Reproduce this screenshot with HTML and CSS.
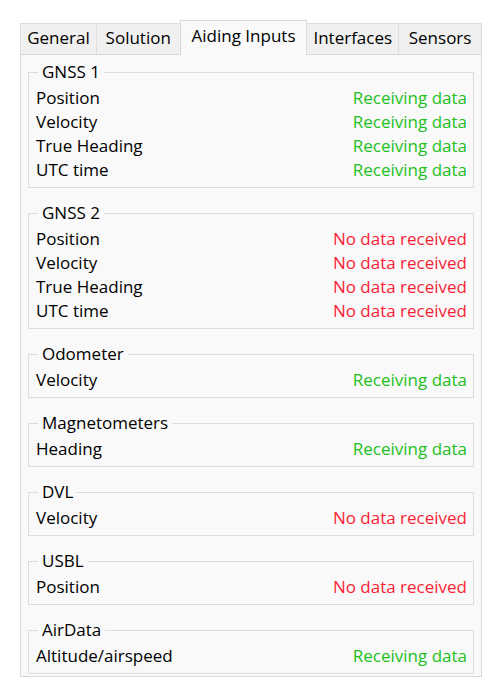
FILE: index.html
```html
<!DOCTYPE html>
<html>
<head>
<meta charset="utf-8">
<link rel="stylesheet" href="styles.css">
</head>
<body>
<div class="window">
  <div class="tabs">
    <div class="tab t-general">General</div>
    <div class="tab t-solution">Solution</div>
    <div class="tab active t-aiding">Aiding Inputs</div>
    <div class="tab t-interfaces">Interfaces</div>
    <div class="tab t-sensors">Sensors</div>
  </div>
  <div class="panel">
    <fieldset class="group">
      <legend>GNSS 1</legend>
      <div class="row"><span>Position</span><span class="ok">Receiving data</span></div>
      <div class="row"><span>Velocity</span><span class="ok">Receiving data</span></div>
      <div class="row"><span>True Heading</span><span class="ok">Receiving data</span></div>
      <div class="row"><span>UTC time</span><span class="ok">Receiving data</span></div>
    </fieldset>
    <fieldset class="group">
      <legend>GNSS 2</legend>
      <div class="row"><span>Position</span><span class="bad">No data received</span></div>
      <div class="row"><span>Velocity</span><span class="bad">No data received</span></div>
      <div class="row"><span>True Heading</span><span class="bad">No data received</span></div>
      <div class="row"><span>UTC time</span><span class="bad">No data received</span></div>
    </fieldset>
    <fieldset class="group">
      <legend>Odometer</legend>
      <div class="row"><span>Velocity</span><span class="ok">Receiving data</span></div>
    </fieldset>
    <fieldset class="group">
      <legend>Magnetometers</legend>
      <div class="row"><span>Heading</span><span class="ok">Receiving data</span></div>
    </fieldset>
    <fieldset class="group">
      <legend>DVL</legend>
      <div class="row"><span>Velocity</span><span class="bad">No data received</span></div>
    </fieldset>
    <fieldset class="group">
      <legend>USBL</legend>
      <div class="row"><span>Position</span><span class="bad">No data received</span></div>
    </fieldset>
    <fieldset class="group">
      <legend>AirData</legend>
      <div class="row"><span>Altitude/airspeed</span><span class="ok">Receiving data</span></div>
    </fieldset>
  </div>
</div>
</body>
</html>
```
FILE: styles.css
```css
html, body {
  margin: 0;
  padding: 0;
  background: #ffffff;
}
body {
  font-family: "Open Sans", "Noto Sans", sans-serif;
  font-size: 17px;
  color: #000000;
}
.window {
  width: 462px;
  padding: 20px 0 0 20px;
}
.tabs {
  display: flex;
  align-items: flex-end;
  height: 34px;
  position: relative;
  z-index: 1;
}
.tab {
  box-sizing: border-box;
  height: 31px;
  line-height: 28px;
  text-align: center;
  background: #f0f0f0;
  border: 1px solid #dddddd;
  border-bottom: none;
  margin-left: -1px;
  white-space: nowrap;
}
.tab:first-child {
  margin-left: 0;
}
.tab.active {
  height: 35px;
  margin-bottom: -1px;
  line-height: 30px;
  background: #f9f9f9;
  border-color: #d9d9d9;
}
.t-general { width: 77px; }
.t-solution { width: 85px; }
.t-aiding { width: 128px; }
.t-interfaces { width: 93px; }
.t-sensors { width: 84px; }
.panel {
  background: #f9f9f9;
  border: 1px solid #d9d9d9;
  padding: 5px 7px 2px 7px;
}
.group {
  margin: 0 0 13px 0;
  padding: 2px 6px 5px 7px;
  border: 1px solid #dcdcdc;
  min-width: 0;
}
.group:last-child {
  margin-bottom: 0;
}
.group legend {
  padding: 0 4px;
  margin-left: 2px;
  line-height: 24px;
  height: 24px;
}
.row {
  display: flex;
  justify-content: space-between;
  height: 24px;
  line-height: 24px;
}
.ok {
  color: #1ec01e;
}
.bad {
  color: #fa1f35;
}
```
